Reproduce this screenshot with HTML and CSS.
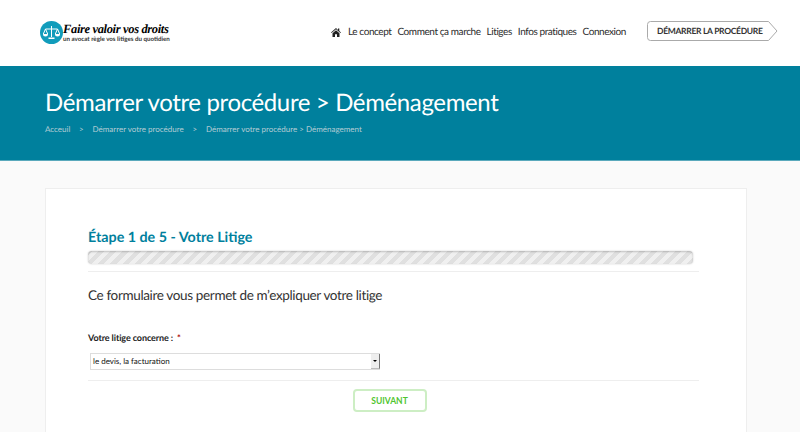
FILE: index.html
```html
<!DOCTYPE html>
<html lang="fr">
<head>
<meta charset="utf-8">
<title>Démarrer votre procédure</title>
<link rel="stylesheet" href="styles.css">
</head>
<body>
<header class="site-header">
  <a class="logo" href="#">
    <svg class="logo-mark" width="23" height="23" viewBox="0 0 23 23">
      <circle cx="11.5" cy="11.5" r="11.5" fill="#119cbb"/>
      <g fill="none" stroke="#fff" stroke-width="1">
        <path d="M11.5 5v11M5.5 8h12"/>
        <path d="M5.5 8l-2.2 5M5.5 8l2.2 5M17.5 8l-2.2 5M17.5 8l2.2 5"/>
      </g>
      <path d="M3 13h5a2.500 2.500 0 0 1-5 0zM15 13h5a2.500 2.500 0 0 1-5 0zM8.500 16.500h6v1.500h-6z" fill="#fff"/>
    </svg>
    <span class="logo-text">
      <span class="logo-title">Faire valoir vos droits</span>
      <span class="logo-tag">un avocat règle vos litiges du quotidien</span>
    </span>
  </a>
  <nav class="nav">
    <a class="nav-home" href="#" aria-label="Accueil">
      <svg width="10" height="9" viewBox="0 0 10 9"><path d="M5 0L0 4.500l.6.600L5 1.300l4.400 3.800.6-.600L8.300 3V.6H7v1.300zM1.500 5.300V9h2.500V6.200h2V9h2.500V5.300L5 2.300z" fill="#222"/></svg>
    </a>
    <a href="#">Le concept</a>
    <a href="#">Comment ça marche</a>
    <a href="#">Litiges</a>
    <a href="#">Infos pratiques</a>
    <a href="#">Connexion</a>
  </nav>
  <a class="cta" href="#">
    <span class="cta-label">DÉMARRER LA PROCÉDURE</span>
    <svg class="cta-shape" width="131" height="20" viewBox="0 0 131 20"><path d="M3.500.5H121.500L130 10l-8.500 9.500H3.500a3 3 0 0 1-3-3V3.500a3 3 0 0 1 3-3z" fill="#fff" stroke="#aaa"/></svg>
  </a>
</header>

<section class="hero">
  <h1>Démarrer votre procédure &gt; Déménagement</h1>
  <ol class="crumbs">
    <li>Acceuil</li>
    <li class="sep">&gt;</li>
    <li>Démarrer votre procédure</li>
    <li class="sep">&gt;</li>
    <li>Démarrer votre procédure &gt; Déménagement</li>
  </ol>
</section>

<main class="page">
  <form class="card">
    <h2>Étape 1 de 5 - Votre Litige</h2>
    <div class="progress"></div>
    <hr class="rule rule-top">
    <p class="intro">Ce formulaire vous permet de m’expliquer votre litige</p>
    <label class="field-label">Votre litige concerne : <span class="req">*</span></label>
    <div class="select">
      <span class="select-value">le devis, la facturation</span>
      <span class="select-arrow"></span>
    </div>
    <hr class="rule rule-bottom">
    <div class="actions"><button class="next" type="button">SUIVANT</button></div>
  </form>
</main>
</body>
</html>
```
FILE: styles.css
```css
* { box-sizing: border-box; }
html, body { margin: 0; height: 432px; overflow: hidden; }
body { font-family: Lato, "Open Sans", sans-serif; background: #fafafa; color: #333; text-rendering: geometricPrecision; }
a { color: inherit; text-decoration: none; }

.site-header { height: 66px; background: #fff; display: flex; align-items: center; padding: 0 22px 0 40px; }
.logo { display: flex; align-items: center; gap: 0; margin-right: auto; margin-top: -1px; }
.logo-mark { flex: none; }
.logo-text { display: flex; flex-direction: column; }
.logo-title { font-family: "Liberation Serif", serif; font-style: italic; font-weight: 700; font-size: 12.500px; line-height: 13px; letter-spacing: -.35px; color: #000; white-space: nowrap; }
.logo-tag { font-weight: 700; font-size: 6.200px; line-height: 7px; color: #333; white-space: nowrap; }

.nav { display: flex; align-items: center; gap: 6px; font-size: 10px; letter-spacing: -.42px; color: #2b2b2b; margin: -2px 21px 0 0; }
.nav-home { display: flex; margin-right: 1px; }
.cta { position: relative; display: flex; align-items: center; width: 131px; height: 20px; margin-top: -4px; }
.cta-shape { position: absolute; left: 0; top: 0; }
.cta-label { position: relative; z-index: 1; padding-left: 10px; font-size: 8.500px; font-weight: 700; letter-spacing: -.3px; color: #333; white-space: nowrap; }

.hero { height: 95px; background: #00809d; border-bottom: 1px solid #5aa9bc; padding: 23px 45px 0; color: #fff; }
.hero h1 { margin: 0; font-size: 24px; line-height: 28px; font-weight: 400; letter-spacing: -.37px; }
.crumbs { list-style: none; display: flex; margin: 6px 0 0; padding: 0; font-size: 8px; line-height: 12px; color: #b4ccd4; }
.crumbs .sep { margin: 0 8.750px; }

.page { padding: 27px 53px 0 45px; }
.card { height: 245px; background: #fff; border: 1px solid #eee; border-bottom: 0; padding: 40px 47px 0 42px; }
.card h2 { margin: 0; font-size: 14.300px; line-height: 18px; font-weight: 700; color: #00809d; }
.progress { width: 605px; height: 13px; margin-top: 4px; border-radius: 4px; background: repeating-linear-gradient(-45deg, #e0e0e0 0 4.250px, #f0f0f0 4.250px 8.500px); box-shadow: inset 0 1px 2px rgba(0,0,0,.2), 0 0 2px rgba(0,0,0,.2); }
.rule { border: 0; border-top: 1px solid #eee; margin: 0; }
.rule-top { margin-top: 7px; }
.intro { margin: 15px 0 0; font-size: 13.500px; line-height: 16px; letter-spacing: -.35px; color: #333; }
.field-label { display: block; margin-top: 29px; font-size: 9px; line-height: 12px; font-weight: 700; letter-spacing: -.1px; color: #222; }
.req { color: #a00; margin-left: 2px; }
.select { display: flex; width: 290px; height: 17px; margin: 9px 0 0 2px; background: #fff; border: 1px solid #ddd; border-right: 0; align-items: stretch; }
.select-value { flex: 1; padding-left: 2px; font-size: 8px; line-height: 15px; color: #111; }
.select-arrow { position: relative; width: 9px; background: #eee; border-right: 1px solid #777; border-bottom: 1px solid #bbb; }
.select-arrow::after { content: ""; position: absolute; left: 2px; top: 6px; border: 2px solid transparent; border-top: 2px solid #000; }
.rule-bottom { margin-top: 10px; }
.actions { display: flex; justify-content: center; padding: 8px 8px 0 0; }
.next { width: 74px; height: 23px; background: #fff; border: 2px solid #cdeec4; border-radius: 4px; font-family: Lato, sans-serif; font-size: 8.500px; font-weight: 700; color: #4fc52f; padding: 0; }
```
